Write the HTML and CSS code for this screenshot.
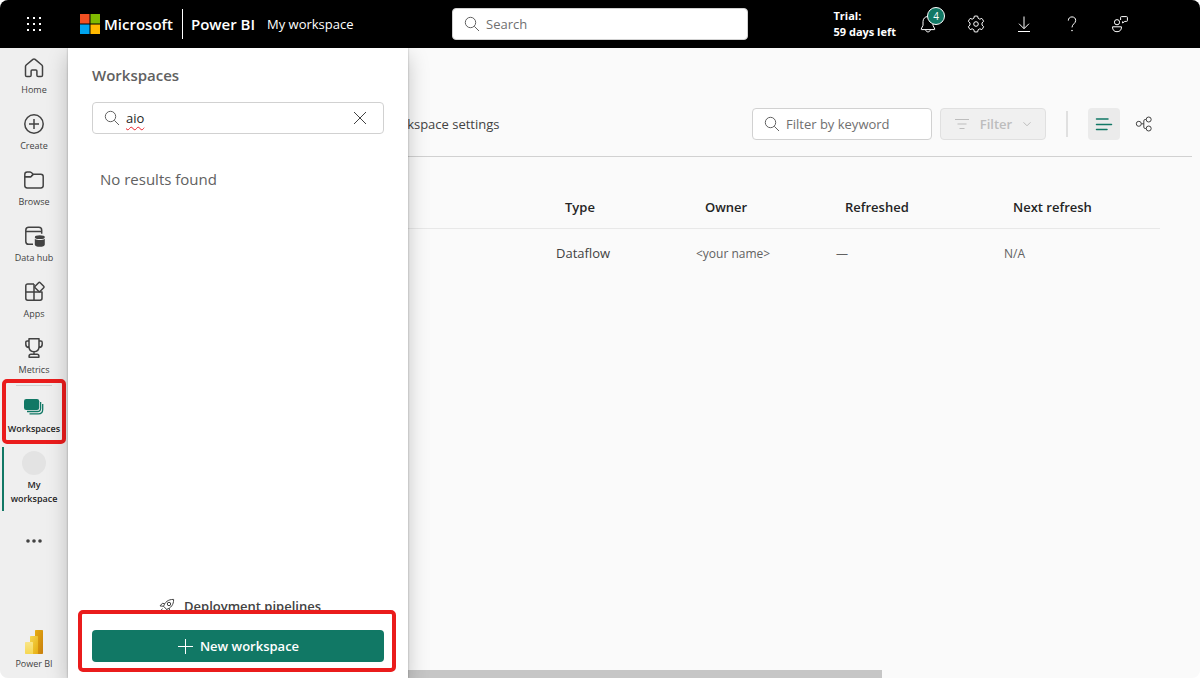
FILE: index.html
```html
<!DOCTYPE html>
<html lang="en">
<head>
<meta charset="utf-8">
<title>Power BI - My workspace</title>
<link rel="stylesheet" href="styles.css">
</head>
<body>
<div class="app">
  <header class="topbar">
    <div class="topbar-left">
      <button class="launcher" aria-label="App launcher">
        <svg width="16" height="16" viewBox="0 0 16 16" fill="#fff"><path d="M1 1h2v2H1zM7 1h2v2H7zM13 1h2v2h-2zM1 7h2v2H1zM7 7h2v2H7zM13 7h2v2h-2zM1 13h2v2H1zM7 13h2v2H7zM13 13h2v2h-2z"/></svg>
      </button>
      <a class="brand" href="#">
        <svg width="20" height="20" viewBox="0 0 20 20"><path fill="#f25022" d="M0 0h9.500v9.500H0z"/><path fill="#7fba00" d="M10.500 0H20v9.500h-9.500z"/><path fill="#00a4ef" d="M0 10.500h9.500V20H0z"/><path fill="#ffb900" d="M10.500 10.500H20V20h-9.500z"/></svg>
        <span>Microsoft</span>
      </a>
      <a class="product" href="#">Power BI</a>
      <a class="crumb" href="#">My workspace</a>
    </div>
    <label class="field field-top">
      <svg width="16" height="16" viewBox="0 0 16 16" class="line"><circle cx="6.500" cy="6.500" r="5.200"/><path d="M10.300 10.300 15 15"/></svg>
      <input type="text" placeholder="Search" aria-label="Search">
    </label>
    <div class="topbar-right">
      <div class="trial">Trial:<br>59 days left</div>
      <button class="top-icon" aria-label="Notifications">
        <svg width="20" height="20" viewBox="0 0 20 20" class="line"><path d="M10 2.500c-3.200 0-5 2.400-5 5.200v3.600L3.200 15c-.1.300 0 .6.400.6h12.800c.4 0 .5-.3.400-.6L15 11.300V7.700c0-2.800-1.800-5.200-5-5.200zM7.700 15.800c.2 1.400 1.100 2.100 2.300 2.100s2.100-.7 2.300-2.100"/></svg>
        <span class="count">4</span>
      </button>
      <button class="top-icon" aria-label="Settings">
        <svg width="20" height="20" viewBox="0 0 20 20" class="line"><circle cx="10" cy="10" r="2.300"/><path d="M8.300 2.200a8 8 0 0 1 3.400 0l.4 2 1.700 1 2-.8a8 8 0 0 1 1.800 3l-1.600 1.500v2.200l1.600 1.500a8 8 0 0 1-1.800 3l-2-.8-1.700 1-.4 2a8 8 0 0 1-3.400 0l-.4-2-1.700-1-2 .8a8 8 0 0 1-1.800-3L4 11.100V8.900L2.400 7.400a8 8 0 0 1 1.800-3l2 .8 1.700-1z" stroke-linejoin="round"/></svg>
      </button>
      <button class="top-icon" aria-label="Download">
        <svg width="20" height="20" viewBox="0 0 20 20" class="line"><path d="M10 2.500v12M5 9.700l5 5 5-5M4 17.500h12"/></svg>
      </button>
      <button class="top-icon" aria-label="Help">
        <svg width="20" height="20" viewBox="0 0 20 20" class="line"><path d="M6.300 6.600c0-2.200 1.500-3.700 3.700-3.700s3.700 1.400 3.700 3.500c0 3.200-3.700 3.600-3.700 7"/><circle cx="10" cy="16.600" r=".4"/></svg>
      </button>
      <button class="top-icon" aria-label="Feedback">
        <svg width="20" height="20" viewBox="0 0 20 20" class="line"><circle cx="7" cy="8.200" r="2.600"/><path d="M2.500 12.800h9c0 3.300-1.600 4.900-4.500 4.900s-4.500-1.600-4.500-4.900zM10.600 6V3.400c0-.5.300-.8.800-.8h5.200c.5 0 .8.300.8.800v3.200c0 .5-.3.800-.8.800h-1.800L12.600 9V7.400" stroke-linejoin="round"/></svg>
      </button>
    </div>
  </header>

  <div class="body">
    <nav class="rail" aria-label="Main">
      <a class="rail-item" href="#">
        <svg width="24" height="24" viewBox="0 0 24 24" class="icon"><path d="M10.900 3.400 4.200 9c-.4.400-.7.900-.7 1.500v8.700c0 .8.500 1.300 1.300 1.300h3c.8 0 1.300-.5 1.300-1.300V15c0-.6.400-1 1-1h3.800c.6 0 1 .4 1 1v4.200c0 .8.500 1.300 1.300 1.300h3c.8 0 1.300-.5 1.300-1.300v-8.700c0-.6-.3-1.100-.7-1.500l-6.700-5.600c-.7-.5-1.500-.5-2.200 0z"/></svg>
        <span>Home</span>
      </a>
      <a class="rail-item" href="#">
        <svg width="24" height="24" viewBox="0 0 24 24" class="icon"><circle cx="12" cy="12" r="9.200"/><path d="M12 7v10M7 12h10"/></svg>
        <span>Create</span>
      </a>
      <a class="rail-item" href="#">
        <svg width="24" height="24" viewBox="0 0 24 24" class="icon"><path d="M2.800 8.800V6.400C2.800 5 3.800 4 5.200 4h2.700c.5 0 1 .2 1.400.5l2 1.700h7.500c1.400 0 2.400 1 2.400 2.400v8.900c0 1.400-1 2.400-2.400 2.400H5.200c-1.400 0-2.400-1-2.400-2.400zh5.100c.5 0 1-.2 1.400-.5l2-2"/><path d="M2.800 8.800h5.100c.5 0 1-.2 1.400-.5l2-2.100"/></svg>
        <span>Browse</span>
      </a>
      <a class="rail-item" href="#">
        <svg width="24" height="24" viewBox="0 0 24 24" class="icon"><path d="M11 20.300H6.700c-1.700 0-2.900-1.200-2.900-2.900V6.200c0-1.700 1.200-2.900 2.900-2.900h10.100c1.700 0 2.900 1.200 2.900 2.900v3.600M3.800 7.500h15.900"/><path class="solid" d="M12.800 14.800c1.200 1 3.200 1.300 5 1.300s3.800-.3 5-1.300v5.700c0 1.400-2.200 2.300-5 2.300s-5-.9-5-2.300z"/><ellipse class="solid" cx="17.800" cy="13.200" rx="5" ry="1.900"/></svg>
        <span>Data hub</span>
      </a>
      <a class="rail-item" href="#">
        <svg width="24" height="24" viewBox="0 0 24 24" class="icon"><path d="M12 4H5.700C4.600 4 3.800 4.800 3.800 5.900v12.400c0 1.100.8 1.900 1.900 1.900h12.400c1.100 0 1.900-.8 1.900-1.900V12H3.800M12 4v16.200"/><path d="m16.600 2.700-3.500 3.500c-.5.500-.5 1.100 0 1.600l3.500 3.500c.5.500 1.100.5 1.600 0l3.500-3.500c.5-.5.5-1.100 0-1.600l-3.500-3.500c-.5-.5-1.100-.5-1.600 0z" fill="#efefef"/></svg>
        <span>Apps</span>
      </a>
      <a class="rail-item" href="#">
        <svg width="24" height="24" viewBox="0 0 24 24" class="icon"><path d="M7 2.800h10v8c0 3-2 4.900-5 4.900s-5-1.900-5-4.900zM7 5H5.200C4.400 5 3.800 5.600 3.800 6.400v1.800C3.800 10.300 5 11.400 7 11.400M17 5h1.800c.8 0 1.400.6 1.400 1.400v1.800c0 2.100-1.200 3.200-3.200 3.200M12 15.700v2.500M9 18.200h6c1.100 0 1.900.7 1.900 1.800v1.200H7.100V20c0-1.100.8-1.800 1.900-1.800z"/></svg>
        <span>Metrics</span>
      </a>
      <hr class="rail-rule">
      <a class="rail-item rail-strong" href="#">
        <svg width="24" height="24" viewBox="0 0 24 24"><rect x="2" y="4" width="15.200" height="11" rx="2.200" fill="#117865"/><path d="M18.600 7v6.200c0 2-1.200 3.300-3.200 3.300H5M20.700 9v5.400c0 2.800-1.600 4.400-4.400 4.400H7.500" fill="none" stroke="#117865" stroke-width="1.300"/></svg>
        <span>Workspaces</span>
        <i class="mark mark-rail"></i>
      </a>
      <a class="rail-item rail-strong rail-current" href="#">
        <i class="avatar"></i>
        <span>My workspace</span>
      </a>
      <button class="more" aria-label="More">
        <svg width="18" height="6" viewBox="0 0 18 6" fill="#424242"><circle cx="3" cy="3" r="1.800"/><circle cx="9" cy="3" r="1.800"/><circle cx="15" cy="3" r="1.800"/></svg>
      </button>
      <a class="rail-item rail-foot" href="#">
        <svg width="24" height="24" viewBox="0 0 24 24">
          <defs>
            <linearGradient id="g1" x1="0" y1="0" x2="1" y2="1"><stop offset="0" stop-color="#e6ad10"/><stop offset="1" stop-color="#c87e0e"/></linearGradient>
            <linearGradient id="g2" x1="0" y1="0" x2="1" y2="1"><stop offset="0" stop-color="#f6d751"/><stop offset="1" stop-color="#e6ad10"/></linearGradient>
            <linearGradient id="g3" x1="0" y1="0" x2="0" y2="1"><stop offset="0" stop-color="#f9e589"/><stop offset="1" stop-color="#f6d751"/></linearGradient>
          </defs>
          <path fill="url(#g1)" d="M13 1c0-.6.400-1 1-1h6c.6 0 1 .4 1 1v22c0 .6-.4 1-1 1h-7z"/>
          <path fill="url(#g2)" d="M8 7c0-.6.400-1 1-1h6c.6 0 1 .4 1 1v17H8z"/>
          <path fill="url(#g3)" d="M3 13c0-.6.400-1 1-1h6c.6 0 1 .4 1 1v11H4c-.6 0-1-.4-1-1z"/>
        </svg>
        <span>Power BI</span>
      </a>
    </nav>

    <main class="main">
      <div class="toolbar">
        <button class="tool-link">Workspace settings</button>
        <label class="field field-filter">
          <svg width="16" height="16" viewBox="0 0 16 16" class="line"><circle cx="6.500" cy="6.500" r="5.200"/><path d="M10.300 10.300 15 15"/></svg>
          <input type="text" placeholder="Filter by keyword" aria-label="Filter by keyword">
        </label>
        <button class="filter" disabled>
          <svg width="16" height="16" viewBox="0 0 16 16" class="line"><path d="M1 3.500h14M3.500 8h9M5.500 12.500h5"/></svg>
          <span>Filter</span>
          <svg width="10" height="10" viewBox="0 0 10 10" class="line"><path d="m1.500 3.300 3.500 3.500 3.500-3.500"/></svg>
        </button>
        <span class="divider"></span>
        <button class="view view-on" aria-label="List view">
          <svg width="18" height="16" viewBox="0 0 18 16" class="line"><path d="M1.500 3h11.500M1.500 8.500h15M1.500 13.500h10.500" stroke-width="1.500" stroke-linecap="round"/></svg>
        </button>
        <button class="view" aria-label="Lineage view">
          <svg width="18" height="18" viewBox="0 0 18 18" class="line"><circle cx="3.800" cy="8.800" r="2.500"/><circle cx="13.700" cy="4.500" r="2.500"/><circle cx="13.700" cy="13.500" r="2.500"/><path d="M6.300 8.800h2.500M11.200 4.500h-1c-.9 0-1.400.5-1.400 1.400v6.200c0 .9.500 1.400 1.400 1.400h1"/></svg>
        </button>
      </div>
      <table class="items">
        <colgroup><col><col class="w-type"><col class="w-owner"><col class="w-refreshed"><col class="w-next"></colgroup>
        <thead><tr><td></td><th>Type</th><th>Owner</th><th>Refreshed</th><th>Next refresh</th></tr></thead>
        <tbody><tr><td></td><td class="type">Dataflow</td><td>&lt;your name&gt;</td><td>—</td><td>N/A</td></tr></tbody>
      </table>
      <div class="scroll"></div>
    </main>

    <aside class="panel">
      <h2>Workspaces</h2>
      <label class="field field-panel">
        <svg width="16" height="16" viewBox="0 0 16 16" class="line"><circle cx="6.500" cy="6.500" r="5.200"/><path d="M10.300 10.300 15 15"/></svg>
        <input type="text" value="aio" aria-label="Search workspaces">
        <button class="clear" aria-label="Clear">
          <svg width="14" height="14" viewBox="0 0 14 14" class="line"><path d="m1 1 12 12M13 1 1 13"/></svg>
        </button>
      </label>
      <p class="empty">No results found</p>
      <div class="panel-foot">
        <a class="pipelines" href="#">
          <svg width="16" height="16" viewBox="0 0 16 16" class="line"><path d="M4.600 8.300C5.800 4.300 9 1.300 14.600 1.400c.2 5.400-2.900 8.700-7 10zM5.700 5.700 3.400 5.300 1 7.900l3.600.4M10.200 10.200l.4 2.500L8 15l-.4-3.600M3.600 10.700 1.200 13M5.400 12.300l-2 2" stroke-linejoin="round"/><circle cx="10" cy="6" r="1.700"/></svg>
          <span>Deployment pipelines</span>
        </a>
        <button class="primary">
          <svg width="16" height="16" viewBox="0 0 16 16" class="line"><path d="M8.500 1v15M1 8.500h15"/></svg>
          <span>New workspace</span>
        </button>
        <i class="mark mark-foot"></i>
      </div>
    </aside>
  </div>
</div>
</body>
</html>
```
FILE: styles.css
```css
* { box-sizing: border-box; }
body {
  margin: 0;
  background: #fff;
  color: #424242;
  font-family: "Segoe UI", "Open Sans", "Noto Sans", sans-serif;
  font-size: 13px;
}
a { color: inherit; text-decoration: none; }
button { font: inherit; color: inherit; border: 0; background: none; padding: 0; }
svg { flex: none; display: block; }
.line { fill: none; stroke: currentColor; stroke-width: 1; }

.app {
  display: flex;
  flex-direction: column;
  min-height: 100vh;
  border-radius: 8px;
  overflow: hidden;
  background: #fafafa;
}

/* Top bar */
.topbar {
  display: grid;
  grid-template-columns: 1fr 296px 1fr;
  align-items: center;
  height: 48px;
  background: #000;
  color: #fff;
  position: relative;
  z-index: 3;
}
.topbar-left { display: flex; align-items: center; white-space: nowrap; }
.launcher { width: 68px; height: 48px; display: grid; place-items: center; }
.brand {
  display: flex;
  align-items: center;
  gap: 4px;
  height: 30px;
  margin-left: 12px;
  padding-right: 9px;
  border-right: 1px solid #fff;
  font-size: 15px;
  font-weight: 600;
}
.product { margin-left: 8px; font-size: 15px; font-weight: 600; }
.crumb { margin-left: 12px; }
.topbar-right { display: flex; align-items: center; justify-content: flex-end; padding-right: 56px; }
.trial { margin-right: 8px; font-size: 11px; line-height: 16px; font-weight: 700; white-space: nowrap; }
.top-icon { position: relative; width: 48px; height: 48px; display: grid; place-items: center; }
.count {
  position: absolute;
  left: 23px;
  top: 7px;
  width: 18px;
  height: 18px;
  border: 1px solid #fff;
  border-radius: 50%;
  background: #117865;
  font-size: 10px;
  line-height: 16px;
  text-align: center;
}

/* Text fields */
.field {
  display: flex;
  align-items: center;
  gap: 6px;
  height: 32px;
  padding: 0 11px;
  border: 1px solid #d1d1d1;
  border-radius: 4px;
  background: #fff;
  color: #616161;
}
.field input {
  flex: 1;
  min-width: 0;
  height: 28px;
  border: 0;
  padding: 0;
  outline: 0;
  background: none;
  font: inherit;
  color: #242424;
}
.field input::placeholder { color: #707070; opacity: 1; }
.field-filter { width: 180px; }
.field-panel input {
  line-height: 28px;
  text-decoration: underline wavy #e8202a 1px;
  text-decoration-skip-ink: none;
  text-underline-offset: 3px;
}
.clear { width: 24px; height: 24px; display: grid; place-items: center; color: #424242; }

/* Left rail */
.body { position: relative; display: flex; flex: 1; }
.rail {
  display: flex;
  flex-direction: column;
  width: 68px;
  background: #efefef;
}
.rail-item {
  position: relative;
  display: flex;
  flex-direction: column;
  align-items: center;
  gap: 3px;
  height: 56px;
  padding-top: 8px;
  font-size: 9px;
  line-height: 14px;
  text-align: center;
}
.icon { fill: none; stroke: #424242; stroke-width: 1.5; stroke-linejoin: round; }
.icon .solid { fill: #424242; stroke: none; }
.rail-rule { width: 36px; height: 1px; margin: 1px auto; border: 0; background: #d1d1d1; }
.rail-strong { font-weight: 600; color: #242424; }
.rail-current {
  height: 64px;
  margin: 4px 2px 0;
  padding: 4px 0 0;
  border-left: 2px solid #117865;
  border-right: 2px solid transparent;
}
.avatar { width: 24px; height: 24px; border-radius: 50%; background: #e3e3e3; }
.more { height: 24px; margin-top: 18px; display: grid; place-items: center; }
.rail-foot { margin-top: auto; }

/* Workspace content */
.main { flex: 1; min-width: 0; display: flex; flex-direction: column; padding-right: 8px; }
.toolbar {
  display: flex;
  align-items: center;
  gap: 8px;
  padding: 60px 32px 16px 314px;
  border-bottom: 1px solid #d1d1d1;
}
.tool-link { margin-right: auto; white-space: nowrap; }
.filter {
  display: flex;
  align-items: center;
  justify-content: center;
  gap: 10px;
  width: 106px;
  height: 32px;
  border: 1px solid #e0e0e0;
  border-radius: 4px;
  background: #f0f0f0;
  color: #bdbdbd;
  font-weight: 600;
}
.divider { width: 2px; height: 26px; margin: 0 12px; background: #e0e0e0; }
.view { width: 32px; height: 32px; border-radius: 4px; display: grid; place-items: center; }
.view-on { background: #ebebeb; color: #117865; }
.items {
  align-self: stretch;
  margin: 29px 32px 0 0;
  border-collapse: collapse;
  table-layout: fixed;
}
.w-type, .w-owner { width: 140px; }
.w-refreshed { width: 168px; }
.w-next { width: 156px; }
.items th {
  height: 42px;
  padding: 0 0 0 9px;
  text-align: left;
  font-weight: 600;
  color: #242424;
}
.items thead tr { border-bottom: 1px solid #e8e8e8; }
.items td { height: 50px; padding: 0; font-size: 12px; color: #616161; }
.items thead td { height: 42px; }
.items .type { font-size: 13px; color: #424242; }
.scroll { width: 814px; max-width: 100%; height: 8px; margin-top: auto; background: #c6c6c6; }

/* Workspaces flyout */
.panel {
  position: absolute;
  left: 68px;
  top: 0;
  bottom: 0;
  z-index: 2;
  display: flex;
  flex-direction: column;
  width: 340px;
  padding: 15px 24px 16px;
  background: #fff;
  box-shadow: 0 0 2px rgba(0, 0, 0, .3), 0 8px 20px rgba(0, 0, 0, .22);
}
.panel h2 { margin: 0 0 15px; font-size: 15px; line-height: 24px; font-weight: 600; color: #616161; }
.empty { margin: 33px 8px 0; font-size: 15px; line-height: 24px; color: #616161; }
.panel-foot { position: relative; display: flex; flex-direction: column; gap: 12px; margin-top: auto; }
.pipelines {
  display: flex;
  align-items: center;
  justify-content: center;
  gap: 9px;
  height: 24px;
  margin-left: 4px;
  font-weight: 600;
}
.primary {
  display: flex;
  align-items: center;
  justify-content: center;
  gap: 7px;
  height: 32px;
  border-radius: 4px;
  background: #117865;
  color: #fff;
  font-weight: 600;
}

/* Highlight boxes */
.mark { position: absolute; border: 4px solid #ea1c1c; border-radius: 5px; }
.mark-rail { left: 2px; right: 2px; top: -8px; height: 65px; }
.mark-foot { left: -14px; right: -12px; bottom: -10px; height: 62px; }
```
